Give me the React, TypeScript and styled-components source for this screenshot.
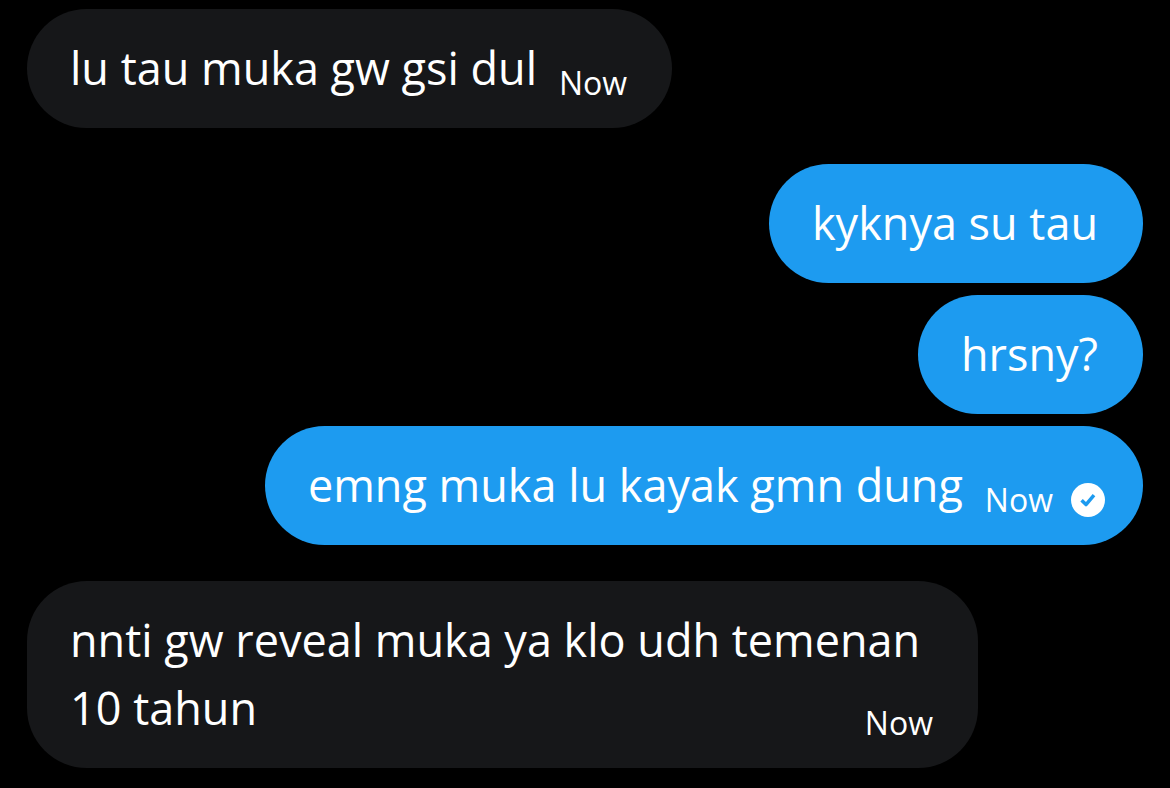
import React from "react";
import styled, { createGlobalStyle } from "styled-components";

const GlobalStyle = createGlobalStyle`
  *, *::before, *::after { box-sizing: border-box; }
  body { margin: 0; background: #000; }
`;

const Thread = styled.main`
  display: flex;
  flex-direction: column;
  gap: 36px;
  min-height: 100vh;
  padding: 9px 27px 19px;
  background: #000;
  color: #fff;
  font-family: "Open Sans", "Noto Sans", sans-serif;
`;

const Group = styled.section<{ $own?: boolean }>`
  display: flex;
  flex-direction: column;
  align-items: ${(p) => (p.$own ? "flex-end" : "flex-start")};
  gap: 12px;
`;

const Bubble = styled.article<{ $own?: boolean; $status?: boolean }>`
  max-width: 951px;
  padding: 25px ${(p) => (p.$status ? 38 : 45)}px 26px 43px;
  border-radius: 60px;
  background: ${(p) => (p.$own ? "#1d9bf0" : "#161719")};
`;

const Text = styled.p`
  display: flow-root;
  margin: 0;
  font-size: 45px;
  line-height: 68px;
`;

/* Floats beside the last line of the message, below its baseline. */
const Meta = styled.span`
  float: right;
  display: flex;
  align-items: center;
  gap: 18px;
  margin: 30px 0 0 22px;
  font-size: 32px;
  line-height: 38px;
`;

const Seen = () => (
  <svg width="34" height="34" viewBox="0 0 34 34" role="img" aria-label="Sent">
    <circle cx="17" cy="17" r="17" fill="#fff" />
    <path d="M10.6 17.2l4.4 4.4 8-9.4" fill="none" stroke="#1d9bf0" strokeWidth="3.5" strokeLinejoin="round" />
  </svg>
);

type MessageProps = { text: string; own?: boolean; time?: string; sent?: boolean };

const Message = ({ text, own, time, sent }: MessageProps) => (
  <Bubble $own={own} $status={sent}>
    <Text>
      {text}
      {time && (
        <Meta>
          <time>{time}</time>
          {sent && <Seen />}
        </Meta>
      )}
    </Text>
  </Bubble>
);

export default function App() {
  return (
    <>
      <GlobalStyle />
      <Thread>
        <Group>
          <Message text="lu tau muka gw gsi dul" time="Now" />
        </Group>
        <Group $own>
          <Message own text="kyknya su tau" />
          <Message own text="hrsny?" />
          <Message own text="emng muka lu kayak gmn dung" time="Now" sent />
        </Group>
        <Group>
          <Message text="nnti gw reveal muka ya klo udh temenan 10 tahun" time="Now" />
        </Group>
      </Thread>
    </>
  );
}
